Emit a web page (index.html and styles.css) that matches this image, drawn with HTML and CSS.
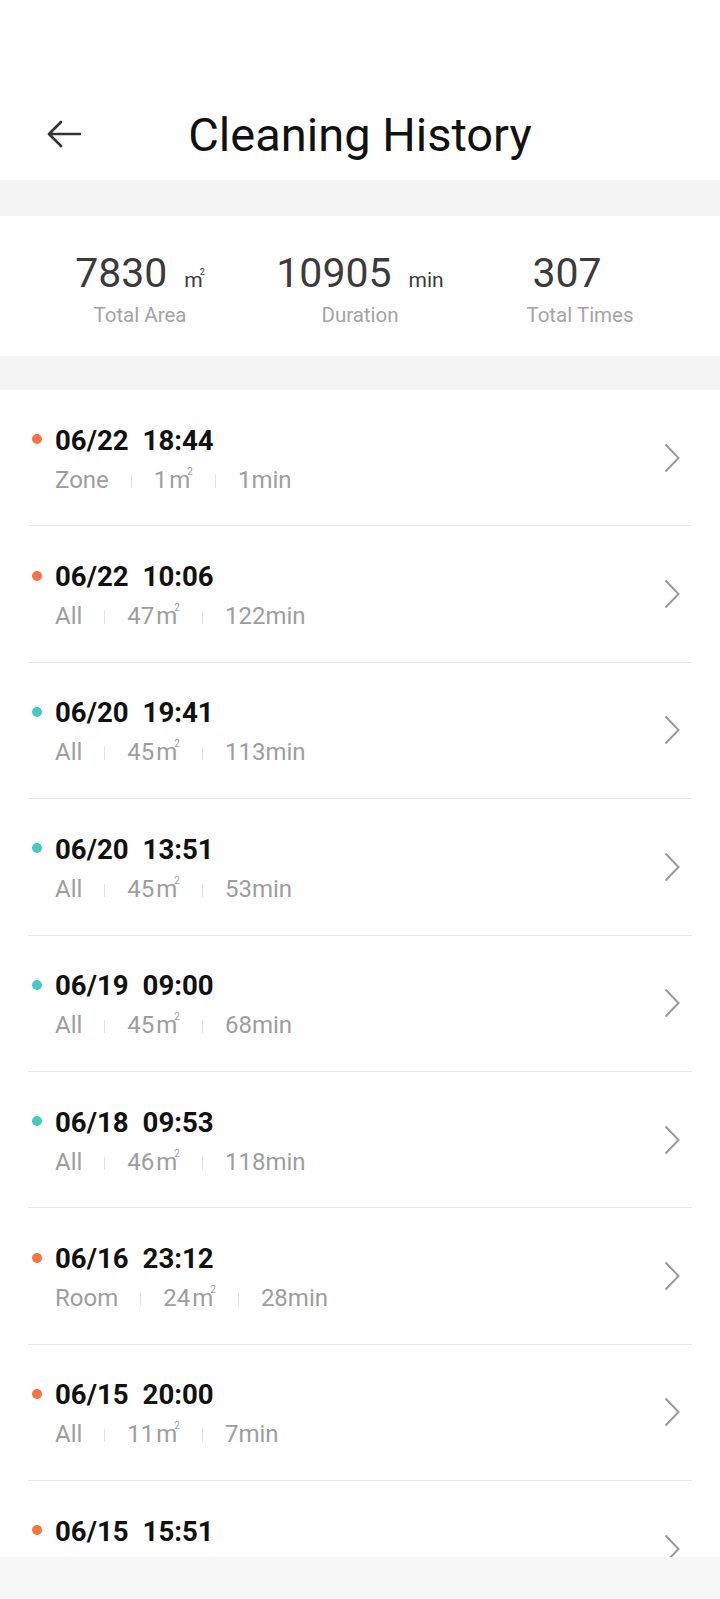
FILE: index.html
```html
<!DOCTYPE html>
<html lang="en">
<head>
<meta charset="utf-8">
<title>Cleaning History</title>
<link rel="stylesheet" href="styles.css">
</head>
<body>
<div class="page">
  <div class="status"></div>
  <header class="header">
    <svg class="back" width="34" height="28" viewBox="0 0 34 28" aria-hidden="true">
      <path d="M33 14 H3 M14 2 L2 14 L14 26" fill="none" stroke="#333" stroke-width="2.6" stroke-linecap="round" stroke-linejoin="round"/>
    </svg>
    <h1 class="title">Cleaning History</h1>
  </header>
  <div class="band band-1"></div>
  <section class="stats">
    <div class="stat">
      <div class="stat-value"><span class="num">7830</span><span class="unit">m<sup class="sq">2</sup></span></div>
      <div class="stat-label">Total Area</div>
    </div>
    <div class="stat">
      <div class="stat-value"><span class="num">10905</span><span class="unit">min</span></div>
      <div class="stat-label">Duration</div>
    </div>
    <div class="stat">
      <div class="stat-value"><span class="num">307</span><span class="unit"></span></div>
      <div class="stat-label">Total Times</div>
    </div>
  </section>
  <div class="band band-2"></div>
  <ul class="list">
    <li class="row"><div class="main"><div class="when"><span class="dot orange"></span><span>06/22</span><span class="time">18:44</span></div><div class="meta"><span>Zone</span><i class="sep"></i><span>1<span class="m">m<sup class="sq">2</sup></span></span><i class="sep"></i><span>1min</span></div></div><svg class="chev" width="16" height="30" viewBox="0 0 16 30"><path d="M1.5 1.5 L14.5 15 L1.5 28.5" fill="none" stroke="#9a9a9a" stroke-width="2"/></svg></li>
    <li class="row"><div class="main"><div class="when"><span class="dot orange"></span><span>06/22</span><span class="time">10:06</span></div><div class="meta"><span>All</span><i class="sep"></i><span>47<span class="m">m<sup class="sq">2</sup></span></span><i class="sep"></i><span>122min</span></div></div><svg class="chev" width="16" height="30" viewBox="0 0 16 30"><path d="M1.5 1.5 L14.5 15 L1.5 28.5" fill="none" stroke="#9a9a9a" stroke-width="2"/></svg></li>
    <li class="row"><div class="main"><div class="when"><span class="dot teal"></span><span>06/20</span><span class="time">19:41</span></div><div class="meta"><span>All</span><i class="sep"></i><span>45<span class="m">m<sup class="sq">2</sup></span></span><i class="sep"></i><span>113min</span></div></div><svg class="chev" width="16" height="30" viewBox="0 0 16 30"><path d="M1.5 1.5 L14.5 15 L1.5 28.5" fill="none" stroke="#9a9a9a" stroke-width="2"/></svg></li>
    <li class="row"><div class="main"><div class="when"><span class="dot teal"></span><span>06/20</span><span class="time">13:51</span></div><div class="meta"><span>All</span><i class="sep"></i><span>45<span class="m">m<sup class="sq">2</sup></span></span><i class="sep"></i><span>53min</span></div></div><svg class="chev" width="16" height="30" viewBox="0 0 16 30"><path d="M1.5 1.5 L14.5 15 L1.5 28.5" fill="none" stroke="#9a9a9a" stroke-width="2"/></svg></li>
    <li class="row"><div class="main"><div class="when"><span class="dot teal"></span><span>06/19</span><span class="time">09:00</span></div><div class="meta"><span>All</span><i class="sep"></i><span>45<span class="m">m<sup class="sq">2</sup></span></span><i class="sep"></i><span>68min</span></div></div><svg class="chev" width="16" height="30" viewBox="0 0 16 30"><path d="M1.5 1.5 L14.5 15 L1.5 28.5" fill="none" stroke="#9a9a9a" stroke-width="2"/></svg></li>
    <li class="row"><div class="main"><div class="when"><span class="dot teal"></span><span>06/18</span><span class="time">09:53</span></div><div class="meta"><span>All</span><i class="sep"></i><span>46<span class="m">m<sup class="sq">2</sup></span></span><i class="sep"></i><span>118min</span></div></div><svg class="chev" width="16" height="30" viewBox="0 0 16 30"><path d="M1.5 1.5 L14.5 15 L1.5 28.5" fill="none" stroke="#9a9a9a" stroke-width="2"/></svg></li>
    <li class="row"><div class="main"><div class="when"><span class="dot orange"></span><span>06/16</span><span class="time">23:12</span></div><div class="meta"><span>Room</span><i class="sep"></i><span>24<span class="m">m<sup class="sq">2</sup></span></span><i class="sep"></i><span>28min</span></div></div><svg class="chev" width="16" height="30" viewBox="0 0 16 30"><path d="M1.5 1.5 L14.5 15 L1.5 28.5" fill="none" stroke="#9a9a9a" stroke-width="2"/></svg></li>
    <li class="row"><div class="main"><div class="when"><span class="dot orange"></span><span>06/15</span><span class="time">20:00</span></div><div class="meta"><span>All</span><i class="sep"></i><span>11<span class="m">m<sup class="sq">2</sup></span></span><i class="sep"></i><span>7min</span></div></div><svg class="chev" width="16" height="30" viewBox="0 0 16 30"><path d="M1.5 1.5 L14.5 15 L1.5 28.5" fill="none" stroke="#9a9a9a" stroke-width="2"/></svg></li>
    <li class="row"><div class="main"><div class="when"><span class="dot orange"></span><span>06/15</span><span class="time">15:51</span></div><div class="meta"><span>All</span><i class="sep"></i><span>30<span class="m">m<sup class="sq">2</sup></span></span><i class="sep"></i><span>40min</span></div></div><svg class="chev" width="16" height="30" viewBox="0 0 16 30"><path d="M1.5 1.5 L14.5 15 L1.5 28.5" fill="none" stroke="#9a9a9a" stroke-width="2"/></svg></li>
  </ul>
  <div class="navbar"></div>
</div>
</body>
</html>
```

FILE: styles.css
```css
* { box-sizing: border-box; }
html, body {
  margin: 0;
  padding: 0;
  background: #ffffff;
}
body {
  font-family: Roboto, "Noto Sans", "Liberation Sans", sans-serif;
  width: 720px;
  height: 1599px;
  overflow: hidden;
}
.page {
  position: relative;
  width: 720px;
  height: 1599px;
  overflow: hidden;
}
.status { height: 80px; }
.header {
  position: relative;
  height: 100px;
  display: flex;
  align-items: center;
  justify-content: center;
}
.back {
  position: absolute;
  left: 47px;
  top: 40px;
}
.title {
  margin: 0;
  font-size: 47px;
  font-weight: 400;
  line-height: 1;
  color: #111111;
  padding-top: 8px;
  padding-left: 0;
}
.band { background: #f4f4f4; }
.band-1 { height: 36px; }
.band-2 { height: 34px; }
.stats {
  height: 140px;
  display: grid;
  grid-template-columns: repeat(3, 1fr);
  padding: 37px 30px 0;
}
.stat {
  display: flex;
  flex-direction: column;
  align-items: center;
}
.stat-value {
  display: flex;
  align-items: baseline;
  height: 40px;
  line-height: 40px;
}
.num {
  font-size: 41px;
  color: #3b3b3b;
}
.unit {
  font-size: 21px;
  color: #3b3b3b;
  margin-left: 17px;
  line-height: 1;
}
.unit:empty { margin-left: 0; width: 26px; }
.stat-label {
  margin-top: 12px;
  font-size: 20.5px;
  line-height: 20px;
  color: #a4a4a4;
}
.sq {
  font-size: 9px;
  line-height: 0;
  vertical-align: 0;
  position: relative;
  top: -12px;
  margin-left: -3px;
}
.list {
  list-style: none;
  margin: 0;
  padding: 0;
}
.row {
  margin: 0 28px;
  height: 136.4px;
  border-bottom: 1px solid #e9e9e9;
  display: flex;
  align-items: center;
}
.main {
  flex: 1;
  padding-top: 3px;
}
.when {
  display: flex;
  align-items: center;
  height: 27px;
  font-size: 27.6px;
  line-height: 27px;
  font-weight: 700;
  color: #111111;
}
.time { margin-left: 14px; }
.dot {
  width: 10px;
  height: 10px;
  border-radius: 50%;
  margin-left: 4px;
  margin-right: 13px;
  position: relative;
  top: -1px;
}
.orange { background: #fb7340; }
.teal { background: #43c9c7; }
.meta {
  margin-top: 14px;
  padding-left: 27px;
  display: flex;
  align-items: baseline;
  height: 24px;
  font-size: 24px;
  line-height: 24px;
  color: #9e9e9e;
}
.meta .m { margin-left: 2px; }
.meta .sq { font-size: 10px; top: -13px; margin-left: -3px; }
.sep {
  align-self: center;
  width: 1px;
  height: 13px;
  background: #e2e2e2;
  margin: 3px 22px 0;
}
.chev {
  margin-right: 12px;
  flex: none;
}
.navbar {
  position: absolute;
  left: 0;
  right: 0;
  bottom: 0;
  height: 42px;
  background: #f7f7f7;
}
```
